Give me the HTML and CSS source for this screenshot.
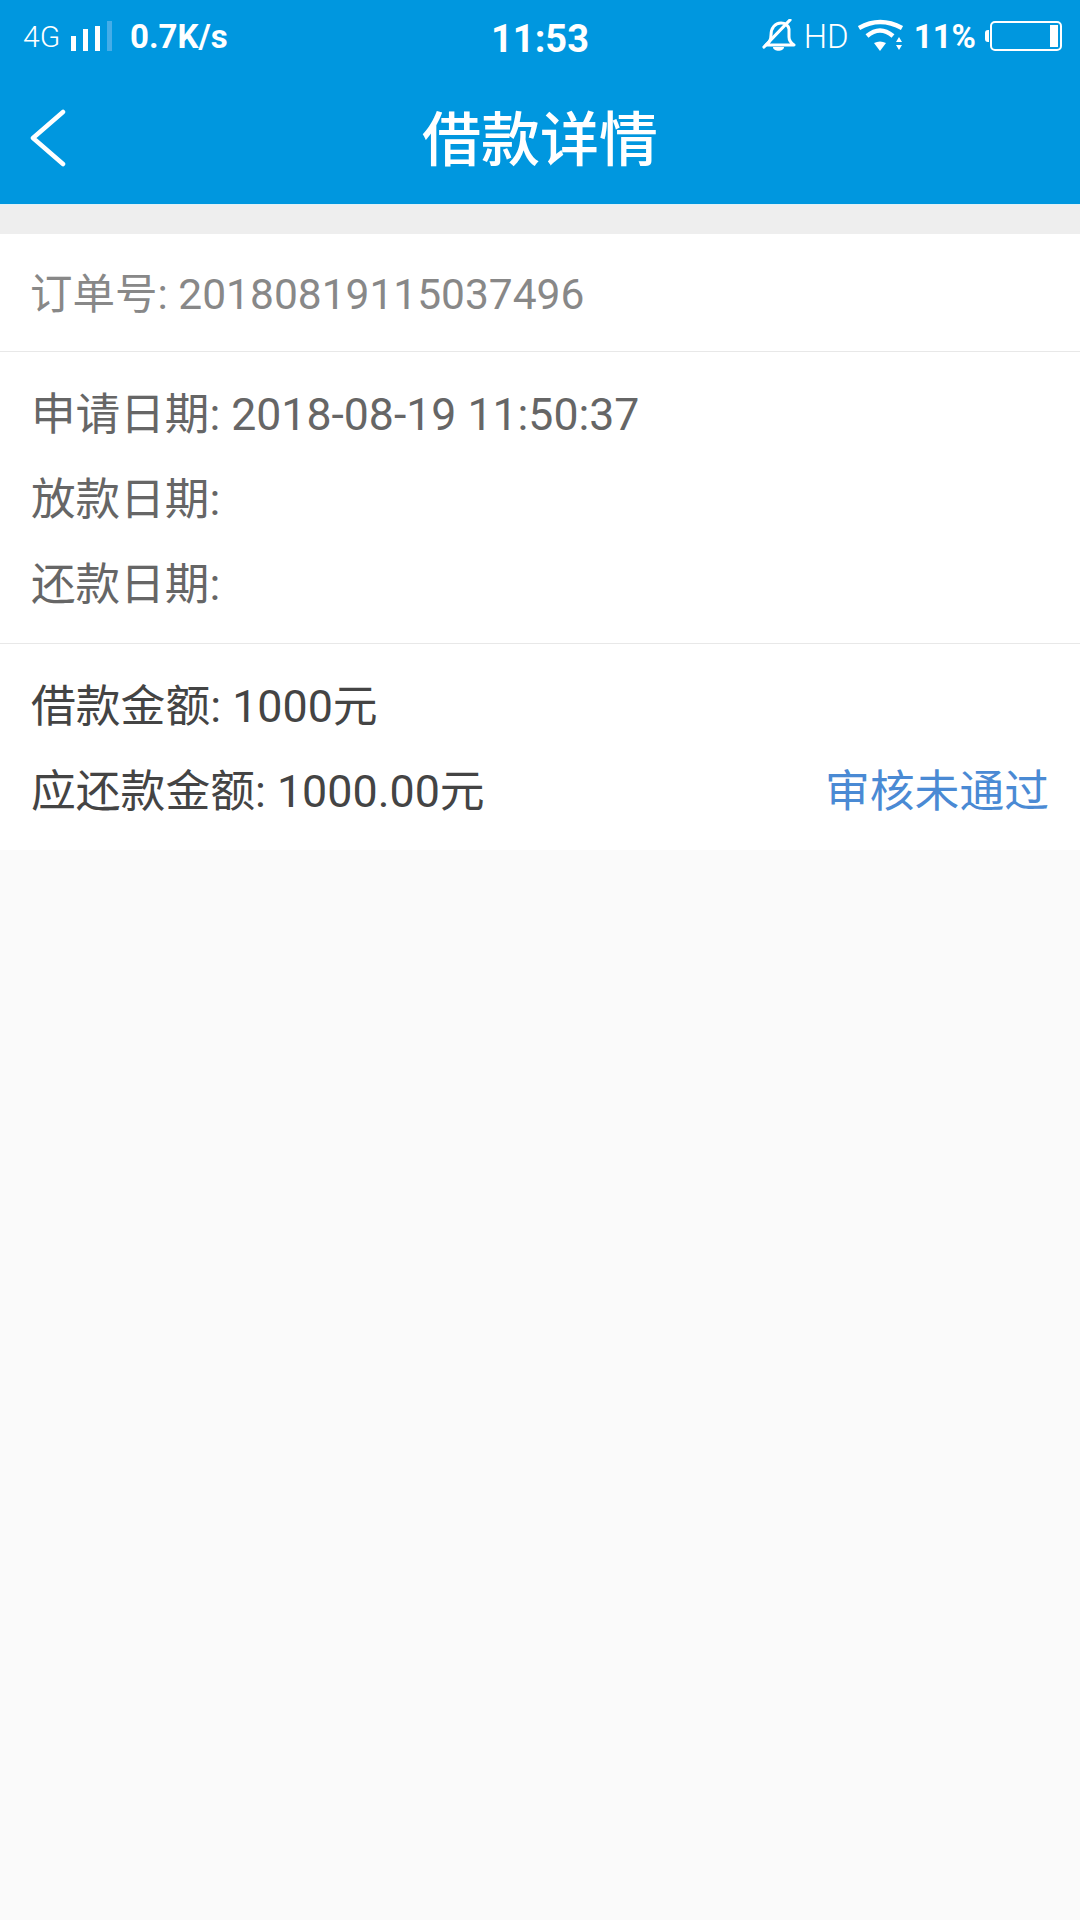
FILE: index.html
```html
<!DOCTYPE html>
<html lang="zh-CN">

<head>
    <meta charset="UTF-8">
    <meta name="viewport" content="width=device-width, initial-scale=1.0">
    <title>借款详情</title>
    <link rel="stylesheet" href="styles.css">
</head>

<body>
    <div class="top">
        <div class="status-bar">
            <div class="status-left">
                <span class="net">4G</span>
                <svg class="signal" width="42" height="32" viewBox="0 0 42 32">
                    <rect x="1" y="16" width="5" height="15" fill="#fff" />
                    <rect x="13" y="9" width="5" height="22" fill="#fff" />
                    <rect x="25" y="6" width="5" height="25" fill="#fff" />
                    <rect x="37" y="1" width="5" height="30" fill="#45ade8" />
                </svg>
                <span class="speed">0.7K/s</span>
            </div>
            <div class="status-time">11:53</div>
            <div class="status-right">
                <svg class="bell" width="34" height="34" viewBox="0 0 34 34">
                    <path d="M4 26c3-2 5-5 5-10 0-7 4-12 10-12 4 0 7 2 8 6v8c0 3 2 6 5 8z" fill="none" stroke="#fff" stroke-width="3" stroke-linejoin="round" />
                    <path d="M11 28h11c0 5-11 5-11 0z" fill="#fff" />
                    <path d="M2 28L28 1" stroke="#fff" stroke-width="3.200" stroke-linecap="round" />
                </svg>
                <span class="hd">HD</span>
                <svg class="wifi" width="46" height="34" viewBox="0 0 46 34">
                    <path d="M1 9Q22-3 44 9" fill="none" stroke="#fff" stroke-width="4.500" />
                    <path d="M9 17Q22 6 35 17" fill="none" stroke="#fff" stroke-width="4.500" />
                    <path d="M16 24Q22 21 28 24L22 32z" fill="#fff" />
                    <path d="M41 18l3 5h-6zM38 26h6l-3 5z" fill="#fff" />
                </svg>
                <span class="pct">11%</span>
                <div class="battery">
                    <div class="battery-nub"></div>
                    <div class="battery-body">
                        <div class="battery-fill"></div>
                    </div>
                </div>
            </div>
        </div>
        <div class="title-bar">
            <svg class="back" width="36" height="58" viewBox="0 0 36 58">
                <path d="M33 3L3 29l30 26" fill="none" stroke="#fff" stroke-width="4.500" stroke-linecap="round" stroke-linejoin="round" />
            </svg>
            <div class="title">借款详情</div>
        </div>
    </div>

    <div class="gap"></div>

    <div class="section order">
        <div class="line">订单号: 20180819115037496</div>
    </div>
    <div class="section dates">
        <div class="line">申请日期: 2018-08-19 11:50:37</div>
        <div class="line">放款日期:</div>
        <div class="line">还款日期:</div>
    </div>
    <div class="section money">
        <div class="line">借款金额: 1000元</div>
        <div class="line row">
            <span>应还款金额: 1000.00元</span>
            <span class="state">审核未通过</span>
        </div>
    </div>
</body>

</html>
```

FILE: styles.css
```css
* {
    padding: 0;
    margin: 0;
    box-sizing: border-box;
}

html,
body {
    height: 100%;
}

body {
    background: #fafafa;
    font-family: Roboto, "Noto Sans CJK SC", sans-serif;
    overflow: hidden;
}

.top {
    height: 204px;
    background: #0097df;
    color: #ffffff;
}

.status-bar {
    height: 70px;
    display: grid;
    grid-template-columns: 1fr auto 1fr;
    align-items: center;
    padding: 2px 18px 0;
}

.status-left,
.status-right {
    display: flex;
    align-items: center;
}

.status-right {
    justify-content: flex-end;
}

.net {
    font-size: 30px;
    font-weight: 300;
    width: 47px;
    margin-left: 5px;
}

.signal {
    margin-right: 18px;
}

.speed {
    font-size: 33px;
    font-weight: 700;
}

.status-time {
    font-size: 38px;
    font-weight: 700;
    padding-top: 5px;
}

.hd {
    font-size: 33px;
    font-weight: 300;
    margin: 0 9px 0 8px;
}

.pct {
    font-size: 33px;
    font-weight: 700;
    margin: 0 9px 0 10px;
}

.battery {
    display: flex;
    align-items: center;
}

.battery-nub {
    width: 4px;
    height: 12px;
    background: #ffffff;
    border-radius: 3px 0 0 3px;
    margin-right: 1px;
}

.battery-body {
    width: 72px;
    height: 30px;
    border: 2px solid #ffffff;
    border-radius: 5px;
    padding: 2px;
    display: flex;
    justify-content: flex-end;
}

.battery-fill {
    width: 8px;
    background: #ffffff;
}

.title-bar {
    position: relative;
    height: 134px;
    display: flex;
    align-items: center;
    justify-content: center;
}

.back {
    position: absolute;
    left: 30px;
    top: 39px;
}

.title {
    font-size: 59px;
    font-weight: 500;
    padding-bottom: 4px;
}

.gap {
    height: 30px;
    background: #eeeeee;
    border-top: 1px solid #dff1f7;
}

.section {
    background: #ffffff;
    padding: 0 31px;
    font-size: 44.800px;
    border-bottom: 1px solid #e8e8e8;
}

.line {
    height: 85px;
    line-height: 85px;
}

.row {
    display: flex;
    justify-content: space-between;
}

.order {
    height: 118px;
    padding-top: 18px;
    padding-left: 30px;
    font-size: 42.500px;
    color: #888888;
}

.dates {
    height: 292px;
    padding-top: 21px;
    font-size: 44.600px;
    color: #666666;
}

.money {
    height: 206px;
    padding-top: 20px;
    border-bottom: none;
    color: #444444;
}

.state {
    color: #4a8ad4;
}
```
